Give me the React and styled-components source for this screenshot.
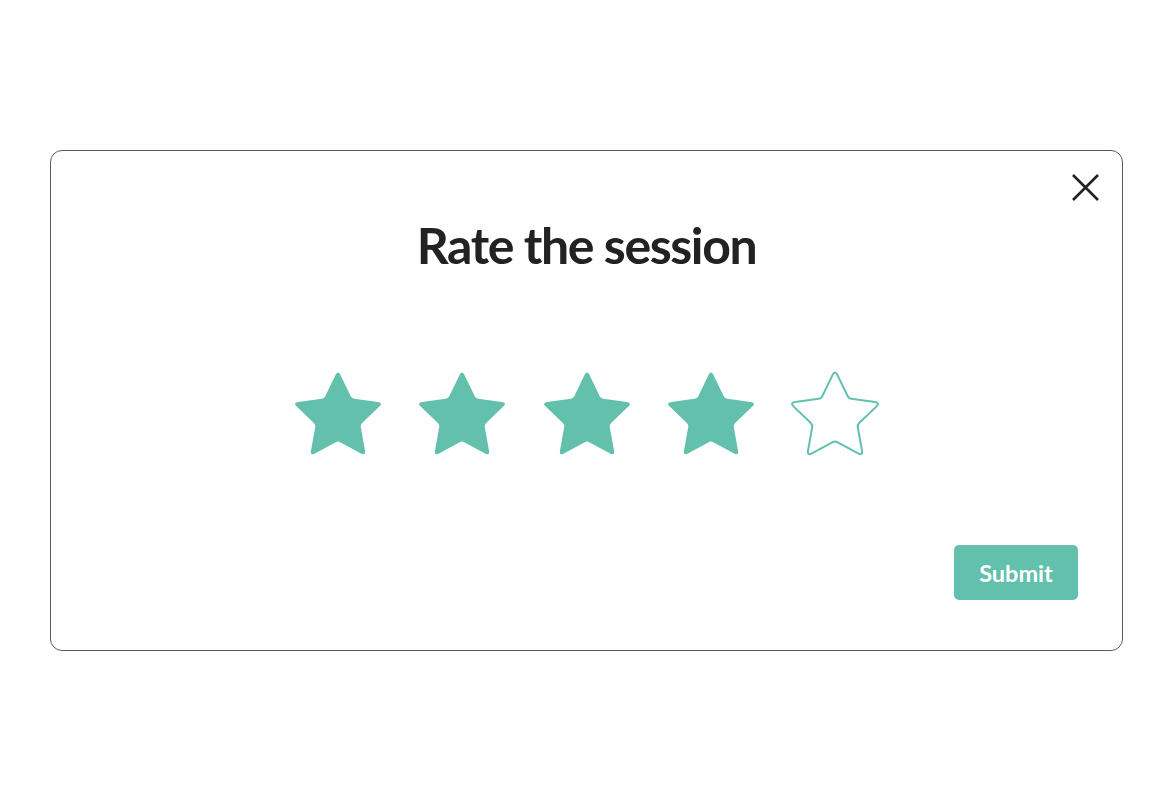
import React, { useState } from 'react';
import styled, { createGlobalStyle } from 'styled-components';

const TEAL = '#63c0ad';

const GlobalStyle = createGlobalStyle`
  html, body {
    margin: 0;
    padding: 0;
    background: #ffffff;
  }

  body {
    font-family: Lato, "Open Sans", "Liberation Sans", sans-serif;
    color: #222222;
  }
`;

const Page = styled.div`
  padding: 150px 48px 0 50px;
`;

const Card = styled.section`
  position: relative;
  box-sizing: border-box;
  height: 501px;
  display: flex;
  flex-direction: column;
  align-items: center;
  padding: 69px 44px 50px;
  border: 1px solid #5a5a5a;
  border-radius: 12px;
  background: #ffffff;
`;

const CloseButton = styled.button`
  position: absolute;
  top: 21px;
  right: 21px;
  width: 31px;
  height: 31px;
  padding: 0;
  border: 0;
  background: none;
  cursor: pointer;
  display: flex;
  align-items: center;
  justify-content: center;
`;

const Title = styled.h1`
  margin: 0;
  font-size: 50px;
  font-weight: 700;
  line-height: 1;
  letter-spacing: -1.4px;
  color: #222222;
`;

const StarRow = styled.div`
  display: flex;
  gap: 34.4px;
  margin-top: 101px;
`;

const StarButton = styled.button`
  width: 90px;
  height: 86px;
  padding: 0;
  border: 0;
  background: none;
  cursor: pointer;

  svg {
    display: block;
  }
`;

const Footer = styled.div`
  margin-top: auto;
  align-self: flex-end;
`;

const SubmitButton = styled.button`
  width: 124px;
  height: 55px;
  border: 0;
  border-radius: 5px;
  background: ${TEAL};
  color: #ffffff;
  font-family: inherit;
  font-size: 23.5px;
  font-weight: 700;
  cursor: pointer;
`;

// rounded five point star, built once
const starPath = (() => {
  const cx = 45;
  const cy = 46.5;
  const pts = [];
  for (let k = 0; k < 10; k++) {
    const a = ((-90 + k * 36) * Math.PI) / 180;
    const r = k % 2 === 0 ? 47.6 : 23.5;
    pts.push({ x: cx + r * Math.cos(a), y: cy + r * Math.sin(a), outer: k % 2 === 0 });
  }
  const toward = (p, q, d) => {
    const len = Math.hypot(q.x - p.x, q.y - p.y);
    return { x: p.x + ((q.x - p.x) * d) / len, y: p.y + ((q.y - p.y) * d) / len };
  };
  let d = '';
  pts.forEach((v, i) => {
    const prev = pts[(i + 9) % 10];
    const next = pts[(i + 1) % 10];
    const cut = v.outer ? 5.5 : 2.5;
    const a = toward(v, prev, cut);
    const b = toward(v, next, cut);
    d += `${i === 0 ? 'M' : 'L'}${a.x.toFixed(2)} ${a.y.toFixed(2)} `;
    d += `Q${v.x.toFixed(2)} ${v.y.toFixed(2)} ${b.x.toFixed(2)} ${b.y.toFixed(2)} `;
  });
  return d + 'Z';
})();

const Star = ({ filled }) => (
  <svg width="90" height="86" viewBox="0 0 90 86">
    {filled ? (
      <path d={starPath} fill={TEAL} />
    ) : (
      <path d={starPath} fill="none" stroke={TEAL} strokeWidth="2" strokeLinejoin="round" />
    )}
  </svg>
);

export default function App() {
  const [rating, setRating] = useState(4);

  return (
    <>
      <GlobalStyle />
      <Page>
        <Card>
          <CloseButton aria-label="Close">
            <svg width="29" height="29" viewBox="0 0 29 29">
              <path d="M2 2 L27 27 M27 2 L2 27" stroke="#222" strokeWidth="2.6" strokeLinecap="butt" />
            </svg>
          </CloseButton>
          <Title>Rate the session</Title>
          <StarRow>
            {[1, 2, 3, 4, 5].map(n => (
              <StarButton key={n} aria-label={`${n} stars`} onClick={() => setRating(n)}>
                <Star filled={n <= rating} />
              </StarButton>
            ))}
          </StarRow>
          <Footer>
            <SubmitButton>Submit</SubmitButton>
          </Footer>
        </Card>
      </Page>
    </>
  );
}
